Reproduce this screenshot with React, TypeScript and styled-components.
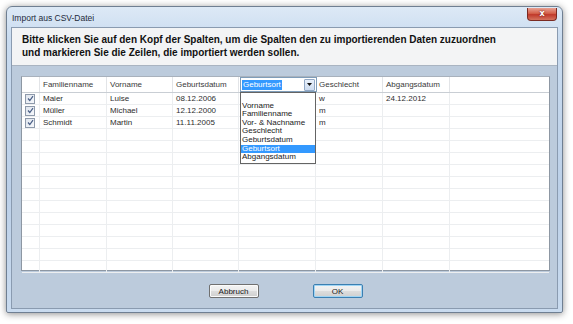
import React from "react";
import styled, { createGlobalStyle } from "styled-components";

const Global = createGlobalStyle`
  html, body { margin: 0; padding: 0; background: #ffffff; }
  body { font-family: "Liberation Sans", Arial, sans-serif; width: 573px; height: 324px; overflow: hidden; }
`;

const Page = styled.div`
  padding: 6px 0 0 6px;
`;

const Window = styled.div`
  width: 557px;
  height: 307px;
  box-sizing: border-box;
  border: 1px solid #6f7f92;
  border-radius: 6px 6px 2px 2px;
  background: linear-gradient(180deg, #dde9f6 0%, #cadcf0 10%, #bcd0e8 60%, #c9dbef 100%);
  box-shadow: 0 1px 7px rgba(0, 0, 0, 0.45);
  display: flex;
  flex-direction: column;
  padding: 0 4px 3px 4px;
`;

const TitleBar = styled.div`
  height: 20px;
  display: flex;
  align-items: center;
  justify-content: space-between;
  padding-left: 1px;
`;

const Title = styled.span`
  font-size: 8.5px;
  color: #1e2a3a;
  margin-top: 1px;
`;

const CloseButton = styled.div`
  width: 30px;
  height: 13px;
  margin-top: -6px;
  margin-right: 1px;
  box-sizing: border-box;
  border: 1px solid #7a2a22;
  border-top: none;
  border-radius: 0 0 4px 4px;
  background: linear-gradient(180deg, #e8a293 0%, #d4604a 45%, #c0392b 55%, #d4735e 100%);
  display: flex;
  align-items: center;
  justify-content: center;
  color: #ffffff;
  font-family: "DejaVu Sans", sans-serif;
  font-weight: bold;
  font-size: 8px;
  line-height: 1;
  text-shadow: 0 0 2px #5a1010;
`;

const Client = styled.div`
  flex: 1;
  display: flex;
  flex-direction: column;
  border: 1px solid #8a9bb0;
  background: #bccbdc;
  min-height: 0;
`;

const HeaderPanel = styled.div`
  height: 38px;
  box-sizing: border-box;
  background: #f3f4f5;
  border-bottom: 1px solid #a9b4c1;
  padding: 5px 0 0 10px;
  font-size: 10px;
  font-weight: bold;
  line-height: 13px;
  color: #111111;
  white-space: nowrap;
`;

const Body = styled.div`
  flex: 1;
  display: flex;
  flex-direction: column;
  padding: 10px 7px 0 9px;
  min-height: 0;
`;

const Grid = styled.div`
  height: 195px;
  box-sizing: border-box;
  background: #ffffff;
  border: 1px solid #8d97a3;
  border-top-color: #a8b1bc;
  display: flex;
  flex-direction: column;
  overflow: visible;
  position: relative;
`;

const COLS = "18px 67px 66px 66px 77px 67px 67px 1fr";

const HeadRow = styled.div`
  display: grid;
  grid-template-columns: ${COLS};
  height: 15px;
  border-bottom: 1px solid #c9ced4;
  flex: none;
`;

const HeadCell = styled.div<{ $last?: boolean }>`
  position: relative;
  font-size: 8px;
  color: #3a3a3a;
  padding: 3px 0 0 3px;
  border-right: ${(p) => (p.$last ? "none" : "1px solid #e2e4e7")};
  white-space: nowrap;
`;

const Row = styled.div`
  display: grid;
  grid-template-columns: ${COLS};
  height: 12px;
  box-sizing: border-box;
  border-bottom: 1px solid #eceef0;
  flex: none;
`;

const Cell = styled.div<{ $last?: boolean }>`
  font-size: 8px;
  line-height: 11px;
  color: #2e2e2e;
  padding-left: 3px;
  border-right: ${(p) => (p.$last ? "none" : "1px solid #eceef0")};
  white-space: nowrap;
  overflow: hidden;
`;

const CheckCell = styled.div`
  border-right: 1px solid #eceef0;
  display: flex;
  align-items: center;
  padding-left: 3px;
`;

const Box = styled.div`
  width: 8px;
  height: 8px;
  border: 1px solid #8e9aab;
  background: linear-gradient(135deg, #dfe5ee 0%, #f6f8fb 100%);
  display: flex;
  align-items: center;
  justify-content: center;
`;

const Combo = styled.div`
  position: absolute;
  left: 1px;
  top: 0;
  width: 77px;
  height: 15px;
  box-sizing: border-box;
  border: 1px solid #7f9db9;
  background: #ffffff;
  display: flex;
  align-items: center;
  padding-left: 1px;
  z-index: 2;
`;

const ComboText = styled.span`
  font-size: 8px;
  line-height: 10px;
  background: #3399ff;
  color: #ffffff;
  padding: 0 1px;
`;

const ComboArrow = styled.div`
  margin-left: auto;
  width: 11px;
  height: 12px;
  margin-right: 1px;
  box-sizing: border-box;
  border: 1px solid #93a9c6;
  border-radius: 1px;
  background: linear-gradient(180deg, #e9f1fb 0%, #cddcf0 100%);
  display: flex;
  align-items: center;
  justify-content: center;
`;

const List = styled.div`
  position: absolute;
  left: 1px;
  top: 15px;
  width: 76px;
  box-sizing: border-box;
  border: 1px solid #646464;
  background: #ffffff;
  z-index: 3;
  padding-bottom: 1px;
`;

const ListItem = styled.div<{ $sel?: boolean }>`
  height: 8.6px;
  font-size: 8px;
  line-height: 8.6px;
  padding-left: 1px;
  color: ${(p) => (p.$sel ? "#ffffff" : "#222222")};
  background: ${(p) => (p.$sel ? "#3399ff" : "transparent")};
  white-space: nowrap;
`;

const Footer = styled.div`
  flex: 1;
  display: flex;
  justify-content: center;
  align-items: flex-start;
  gap: 54px;
  padding-top: 13px;
`;

const Button = styled.div<{ $default?: boolean }>`
  width: 50px;
  height: 14px;
  box-sizing: border-box;
  border: 1px solid ${(p) => (p.$default ? "#3c7fb1" : "#707070")};
  border-radius: 2px;
  background: linear-gradient(180deg, #f4f4f4 0%, #ebebeb 48%, #dddddd 52%, #cfcfcf 100%);
  box-shadow: ${(p) => (p.$default ? "inset 0 0 0 1px #9fd5f5" : "inset 0 0 0 1px #fbfbfb")};
  font-size: 8px;
  color: #1a1a1a;
  display: flex;
  align-items: center;
  justify-content: center;
`;

const data = [
  ["Maier", "Luise", "08.12.2006", "", "w", "24.12.2012"],
  ["Müller", "Michael", "12.12.2000", "", "m", ""],
  ["Schmidt", "Martin", "11.11.2005", "", "m", ""],
];

const options = [
  "",
  "Vorname",
  "Familienname",
  "Vor- & Nachname",
  "Geschlecht",
  "Geburtsdatum",
  "Geburtsort",
  "Abgangsdatum",
];

const Check = () => (
  <svg width="7" height="7" viewBox="0 0 7 7">
    <path d="M1 3.5 L2.8 5.5 L6 1.2" fill="none" stroke="#4a5f86" strokeWidth="1.2" />
  </svg>
);

const Arrow = () => (
  <svg width="5" height="3" viewBox="0 0 5 3">
    <path d="M0 0 H5 L2.5 3 Z" fill="#111" />
  </svg>
);

export default function App() {
  const emptyRows = Array.from({ length: 12 });
  return (
    <>
      <Global />
      <Page>
        <Window>
          <TitleBar>
            <Title>Import aus CSV-Datei</Title>
            <CloseButton>x</CloseButton>
          </TitleBar>
          <Client>
            <HeaderPanel>
              Bitte klicken Sie auf den Kopf der Spalten, um die Spalten den zu importierenden Daten zuzuordnen
              <br />
              und markieren Sie die Zeilen, die importiert werden sollen.
            </HeaderPanel>
            <Body>
              <Grid>
                <HeadRow>
                  <HeadCell />
                  <HeadCell>Familienname</HeadCell>
                  <HeadCell>Vorname</HeadCell>
                  <HeadCell>Geburtsdatum</HeadCell>
                  <HeadCell>
                    <Combo>
                      <ComboText>Geburtsort</ComboText>
                      <ComboArrow>
                        <Arrow />
                      </ComboArrow>
                    </Combo>
                    <List>
                      {options.map((o, i) => (
                        <ListItem key={i} $sel={o === "Geburtsort"}>
                          {o}
                        </ListItem>
                      ))}
                    </List>
                  </HeadCell>
                  <HeadCell>Geschlecht</HeadCell>
                  <HeadCell>Abgangsdatum</HeadCell>
                  <HeadCell $last />
                </HeadRow>
                {data.map((r, i) => (
                  <Row key={i}>
                    <CheckCell>
                      <Box>
                        <Check />
                      </Box>
                    </CheckCell>
                    {r.map((c, j) => (
                      <Cell key={j}>{c}</Cell>
                    ))}
                    <Cell $last />
                  </Row>
                ))}
                {emptyRows.map((_, i) => (
                  <Row key={"e" + i}>
                    <Cell />
                    <Cell />
                    <Cell />
                    <Cell />
                    <Cell />
                    <Cell />
                    <Cell />
                    <Cell $last />
                  </Row>
                ))}
              </Grid>
              <Footer>
                <Button>Abbruch</Button>
                <Button $default>OK</Button>
              </Footer>
            </Body>
          </Client>
        </Window>
      </Page>
    </>
  );
}
